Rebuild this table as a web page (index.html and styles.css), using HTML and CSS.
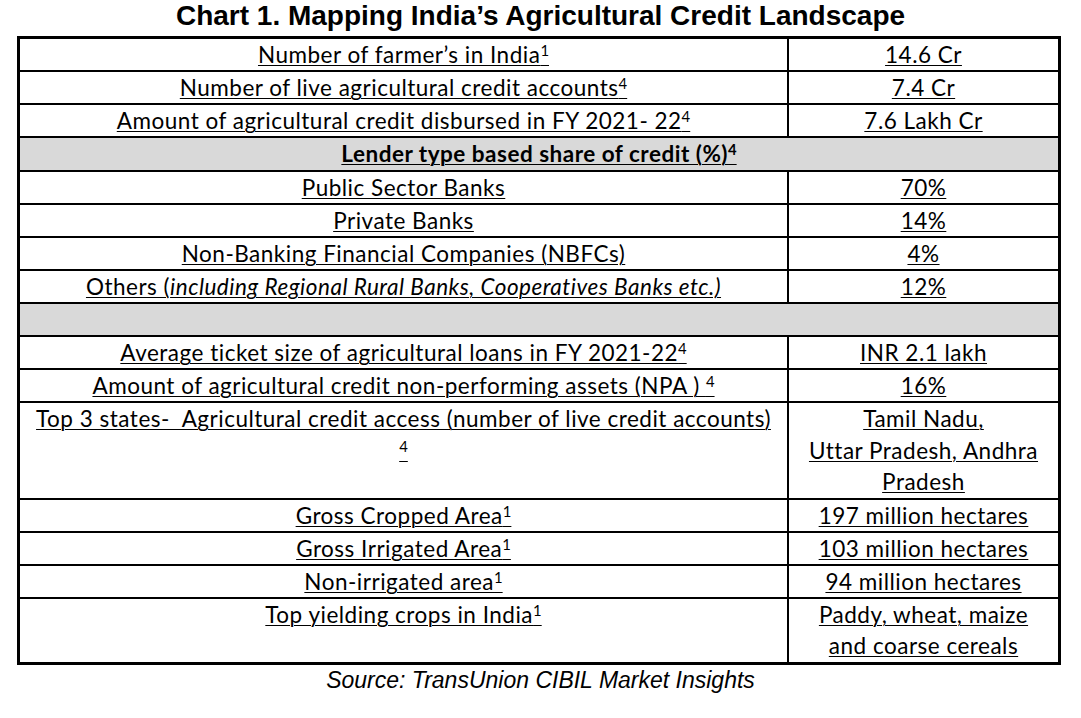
FILE: index.html
```html
<!DOCTYPE html>
<html lang="en">
<head>
<meta charset="utf-8">
<title>Chart 1. Mapping India’s Agricultural Credit Landscape</title>
<link rel="stylesheet" href="styles.css">
</head>
<body>
<div class="page">
  <h1 class="title">Chart 1. Mapping India’s Agricultural Credit Landscape</h1>
  <table class="grid">
    <colgroup><col class="c-label"><col class="c-value"></colgroup>
    <tbody>
      <tr><td class="l"><span class="u">Number of farmer’s in India<sup>1</sup></span></td><td><span class="u">14.6 Cr</span></td></tr>
      <tr><td class="l"><span class="u">Number of live agricultural credit accounts<sup>4</sup></span></td><td><span class="u">7.4 Cr</span></td></tr>
      <tr><td class="l"><span class="u">Amount of agricultural credit disbursed in FY 2021- 22<sup>4</sup></span></td><td><span class="u">7.6 Lakh Cr</span></td></tr>
      <tr class="shade"><td colspan="2"><span class="u b">Lender type based share of credit (%)<sup>4</sup></span></td></tr>
      <tr><td class="l"><span class="u">Public Sector Banks</span></td><td><span class="u">70%</span></td></tr>
      <tr><td class="l"><span class="u">Private Banks</span></td><td><span class="u">14%</span></td></tr>
      <tr><td class="l"><span class="u">Non-Banking Financial Companies (NBFCs)</span></td><td><span class="u">4%</span></td></tr>
      <tr><td class="l"><span class="u">Others (<i>including Regional Rural Banks, Cooperatives Banks etc.)</i></span></td><td><span class="u">12%</span></td></tr>
      <tr class="shade"><td colspan="2">&nbsp;</td></tr>
      <tr><td class="l"><span class="u">Average ticket size of agricultural loans in FY 2021-22<sup>4</sup></span></td><td><span class="u">INR 2.1 lakh</span></td></tr>
      <tr><td class="l"><span class="u">Amount of agricultural credit non-performing assets (NPA ) <sup>4</sup></span></td><td><span class="u">16%</span></td></tr>
      <tr class="tall"><td class="l"><span class="u">Top 3 states-&nbsp; Agricultural credit access (number of live credit accounts)</span><br><span class="u"><sup>4</sup></span></td><td><span class="u">Tamil Nadu,</span><br><span class="u">Uttar Pradesh, Andhra</span><br><span class="u">Pradesh</span></td></tr>
      <tr><td class="l"><span class="u">Gross Cropped Area<sup>1</sup></span></td><td><span class="u">197 million hectares</span></td></tr>
      <tr><td class="l"><span class="u">Gross Irrigated Area<sup>1</sup></span></td><td><span class="u">103 million hectares</span></td></tr>
      <tr><td class="l"><span class="u">Non-irrigated area<sup>1</sup></span></td><td><span class="u">94 million hectares</span></td></tr>
      <tr class="tall last"><td class="l"><span class="u">Top yielding crops in India<sup>1</sup></span></td><td><span class="u">Paddy, wheat, maize</span><br><span class="u">and coarse cereals</span></td></tr>
    </tbody>
  </table>
  <p class="source">Source: TransUnion CIBIL Market Insights</p>
</div>
</body>
</html>
```

FILE: styles.css
```css
html, body {
  margin: 0;
  padding: 0;
  background: #ffffff;
}

.page {
  width: 1081px;
  color: #000000;
}

.title {
  margin: 0 0 4px;
  font-family: "Liberation Sans", Arial, sans-serif;
  font-weight: bold;
  font-size: 28px;
  line-height: 32px;
  text-align: center;
}

.grid {
  margin-left: 17px;
  width: 1044px;
  table-layout: fixed;
  border-collapse: separate;
  border-spacing: 0;
  border: 3px solid #000000;
  font-family: Lato, "Noto Sans", sans-serif;
  font-size: 22.5px;
  letter-spacing: 0.5px;
  line-height: 31.12px;
}

.c-label { width: 769px; }
.c-value { width: 269px; }

.grid td {
  padding: 0;
  text-align: center;
  vertical-align: top;
  border-bottom: 2px solid #000000;
  white-space: nowrap;
}

.grid td.l {
  border-right: 2px solid #000000;
}

.grid tr.last td {
  border-bottom: none;
}

.grid tr.tall td {
  padding-bottom: 1px;
}

.shade td {
  background: #d9d9d9;
}

.u {
  text-decoration: underline;
  text-decoration-thickness: 1px;
  text-underline-offset: 2px;
}

.b {
  font-weight: bold;
}

sup {
  font-size: 0.66em;
  line-height: 0;
  vertical-align: 0.5em;
  letter-spacing: 0;
}

.source {
  margin: 2px 0 0;
  font-family: "Liberation Sans", Arial, sans-serif;
  font-style: italic;
  font-size: 23px;
  line-height: 26px;
  text-align: center;
}
```
